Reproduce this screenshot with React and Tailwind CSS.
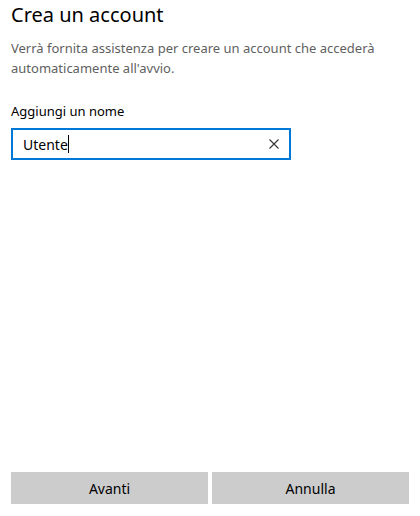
import React, { useState } from 'react';

const App = () => {
  const [name, setName] = useState('Utente');

  return (
    <div className="w-[420px] h-[516px] bg-white flex flex-col text-[#000] font-['Noto_Sans',sans-serif]">
      <div className="flex-grow px-[11px]">
        {/* Header */}
        <h1 className="text-[20px] leading-[26px] pt-[2px] font-normal">Crea un account</h1>
        <p className="mt-[10px] text-[13px] leading-[20px] text-[#5f5f5f]">
          Verrà fornita assistenza per creare un account che accederà automaticamente all'avvio.
        </p>

        {/* Name field */}
        <label className="block mt-[24px] text-[13px] leading-[18px]">Aggiungi un nome</label>
        <div className="mt-[8px] w-[280px] h-[32px] border-2 border-[#0078d7] flex items-center pl-[10px] pr-[8px]">
          <div className="flex-grow flex items-center text-[14px]">
            <span>{name}</span>
            <span className="w-[1px] h-[18px] bg-black" />
          </div>
          <button className="w-[14px] h-[14px] flex items-center justify-center" onClick={() => setName('')}>
            <svg width="10" height="10" viewBox="0 0 10 10">
              <path d="M0.5 0.5 L9.5 9.5 M9.5 0.5 L0.5 9.5" stroke="#333" strokeWidth="1.1" />
            </svg>
          </button>
        </div>
      </div>

      {/* Footer buttons */}
      <div className="flex gap-[4px] px-[11px] pb-[12px]">
        <button className="flex-1 h-[32px] bg-[#cccccc] text-[14px]">Avanti</button>
        <button className="flex-1 h-[32px] bg-[#cccccc] text-[14px]">Annulla</button>
      </div>
    </div>
  );
};

export default App;
